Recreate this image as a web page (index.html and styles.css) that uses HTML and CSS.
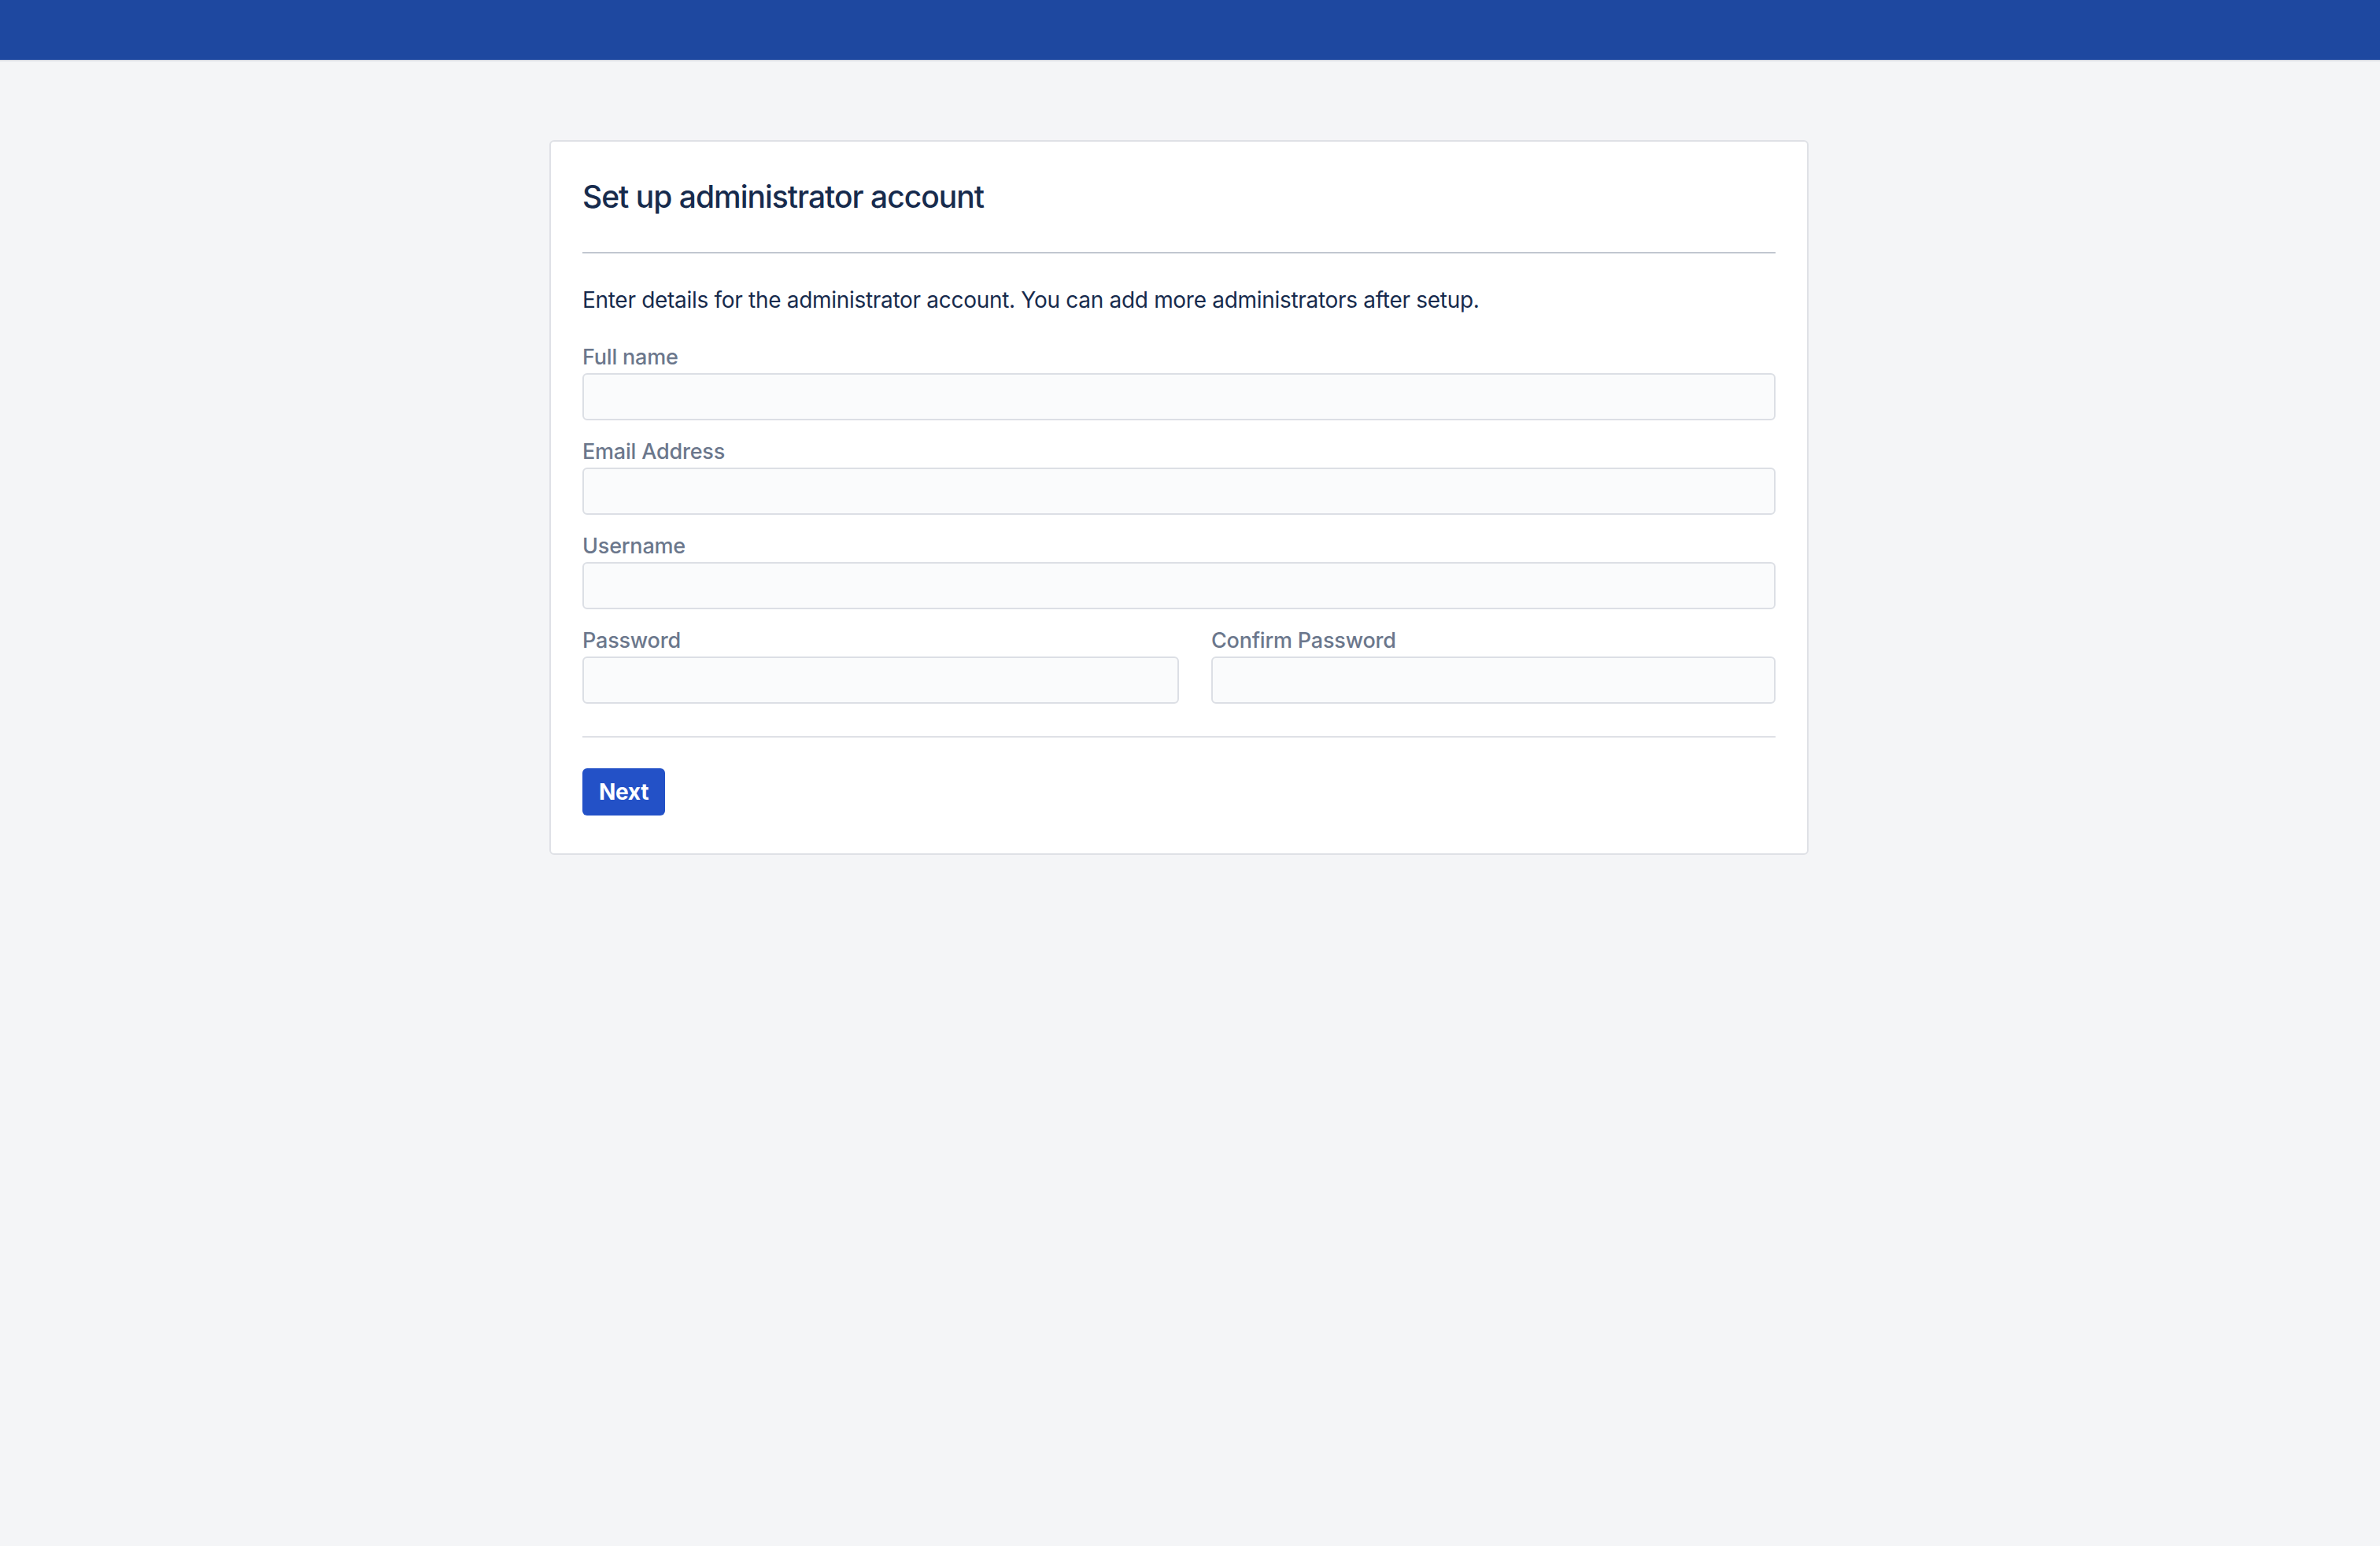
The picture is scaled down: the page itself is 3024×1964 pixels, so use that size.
FILE: index.html
```html
<!DOCTYPE html>
<html lang="en">
<head>
<meta charset="utf-8">
<title>Set up administrator account</title>
<link rel="stylesheet" href="styles.css">
</head>
<body>
<header class="topbar"></header>
<main class="page">
  <section class="card">
    <div class="card-header">
      <h1 class="title">Set up administrator account</h1>
    </div>
    <p class="intro">Enter details for the administrator account. You can add more administrators after setup.</p>
    <form class="form">
      <div class="field">
        <label class="label" for="fullname">Full name</label>
        <input class="input" id="fullname" type="text">
      </div>
      <div class="field">
        <label class="label" for="email">Email Address</label>
        <input class="input" id="email" type="text">
      </div>
      <div class="field">
        <label class="label" for="username">Username</label>
        <input class="input" id="username" type="text">
      </div>
      <div class="field-row">
        <div class="field">
          <label class="label" for="password">Password</label>
          <input class="input" id="password" type="password">
        </div>
        <div class="field field-right">
          <label class="label" for="confirm">Confirm Password</label>
          <input class="input" id="confirm" type="password">
        </div>
      </div>
      <div class="actions">
        <button class="btn" type="button">Next</button>
      </div>
    </form>
  </section>
</main>
</body>
</html>
```
FILE: styles.css
```css
* { box-sizing: border-box; }
html, body { margin: 0; padding: 0; }
body {
  background: #f4f5f7;
  font-family: Inter, "Noto Sans", sans-serif;
  color: #172b4d;
  min-height: 1964px;
}
.topbar {
  height: 78px;
  background: #1e48a0;
  border-bottom: 2px solid #d9dde6;
}
.page {
  padding: 100px 28px 0 0;
}
.card {
  width: 1600px;
  margin: 0 auto;
  background: #ffffff;
  border: 2px solid #dfe1e6;
  border-radius: 6px;
  padding: 46px 40px 48px;
}
.card-header {
  border-bottom: 2px solid #c1c7d0;
  padding-bottom: 46px;
}
.title {
  margin: 0;
  font-size: 39px;
  line-height: 48px;
  font-weight: 500;
  color: #172b4d;
  letter-spacing: -1px;
}
.intro {
  margin: 39px 0 0;
  font-size: 28px;
  line-height: 40px;
  color: #172b4d;
  letter-spacing: -0.3px;
}
.form {
  margin-top: 37px;
  display: flex;
  flex-direction: column;
  gap: 24px;
}
.field {
  display: flex;
  flex-direction: column;
  gap: 4px;
}
.label {
  font-size: 27px;
  line-height: 32px;
  font-weight: 500;
  color: #6b778c;
  letter-spacing: -0.2px;
}
.input {
  height: 60px;
  width: 100%;
  background: #fafbfc;
  border: 2px solid #dcdfe5;
  border-radius: 6px;
  font: inherit;
  margin: 0;
  padding: 0 12px;
}
.field-row {
  display: grid;
  grid-template-columns: 1fr 1fr;
}
.field-right {
  padding-left: 41px;
}
.actions {
  margin-top: 17px;
  border-top: 2px solid #dfe1e6;
  padding-top: 39px;
}
.btn {
  height: 60px;
  padding: 0 21px;
  background: #2351c7;
  color: #ffffff;
  border: none;
  border-radius: 6px;
  font-family: Inter, "Noto Sans", sans-serif;
  font-size: 28px;
  font-weight: 700;
  letter-spacing: -0.3px;
}
```
